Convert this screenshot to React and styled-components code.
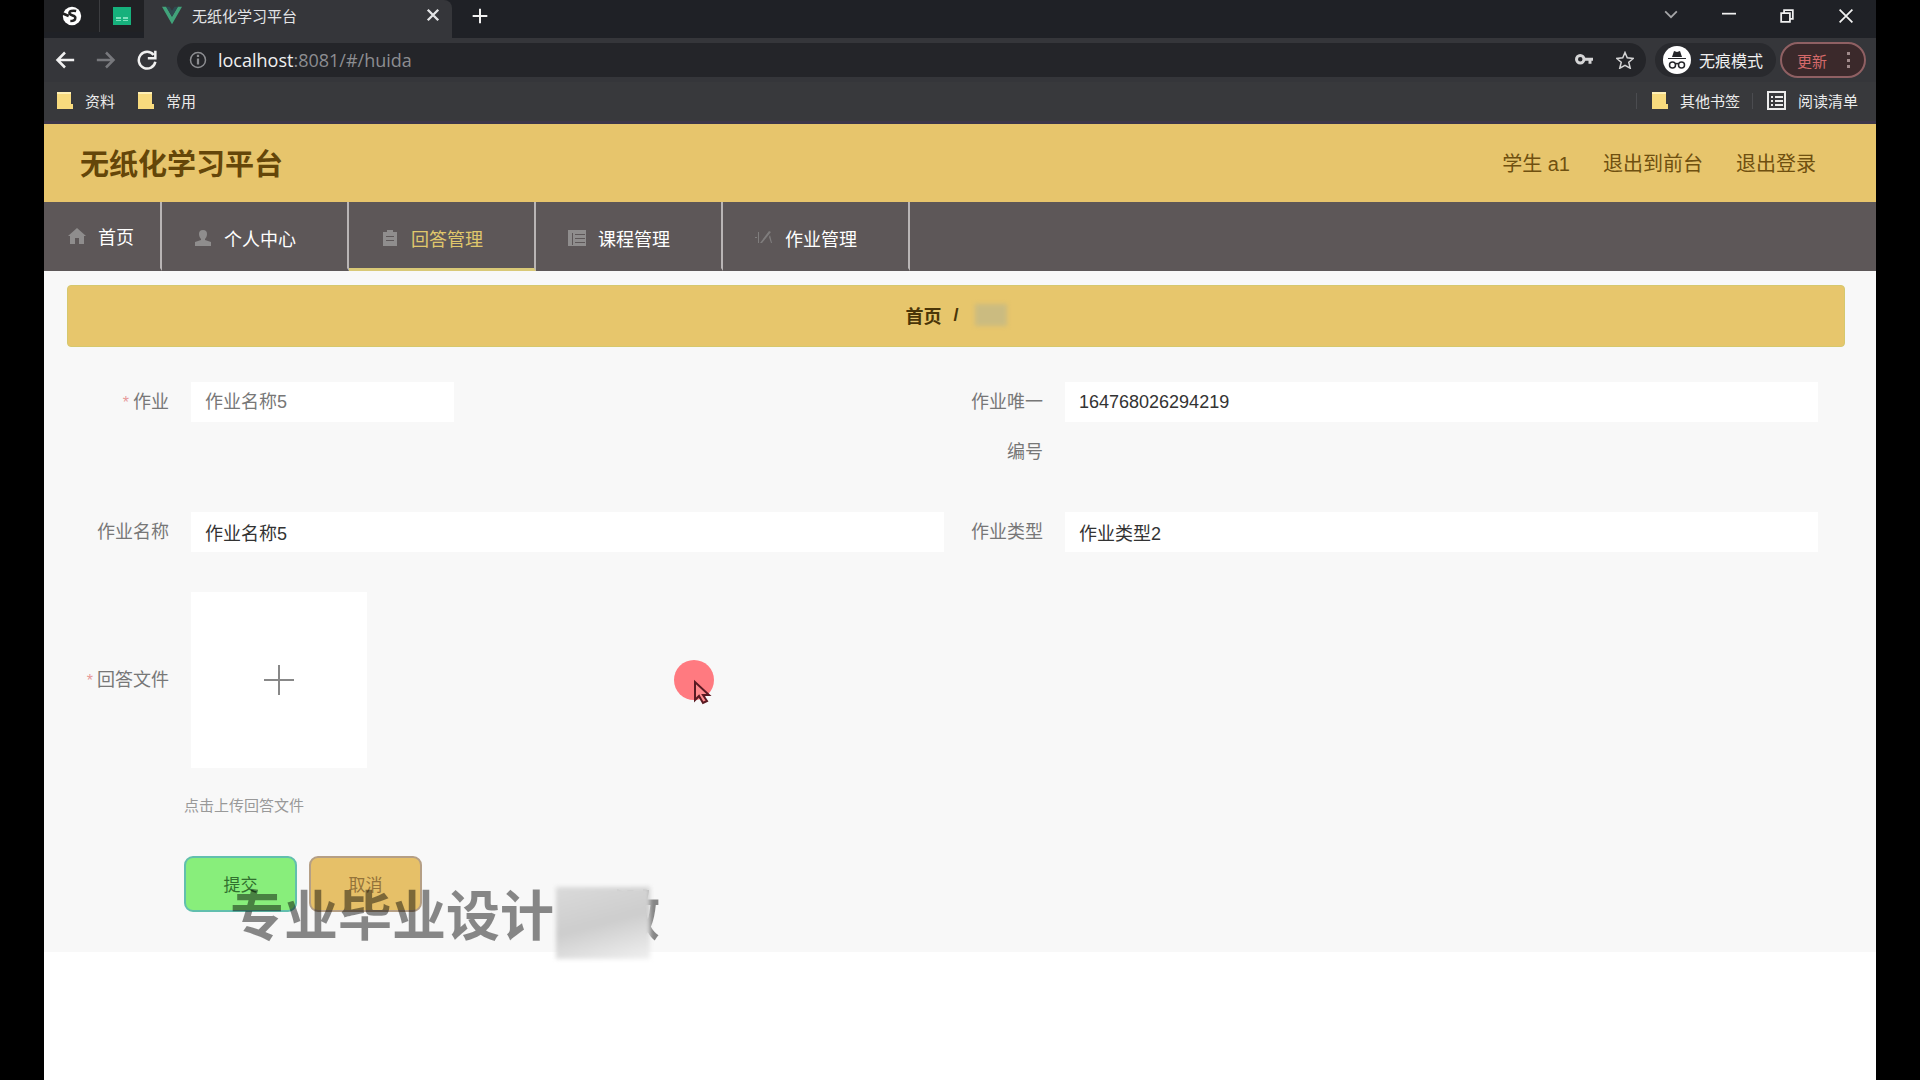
import React, { Component } from "react";
import styled, { createGlobalStyle } from "styled-components";

const GlobalStyle = createGlobalStyle`
  * {
    box-sizing: border-box;
  }

  body {
    margin: 0;
    background: #000;
    font-family: "Liberation Sans", "Noto Sans CJK SC", sans-serif;
  }

  button, input, select {
    font-family: inherit;
  }
`;

const Screen = styled.div`
  position: relative;
  min-height: 100vh;
  margin: 0 44px;
  background: #fff;
`;

/* browser window */

const TabStrip = styled.div`
  display: flex;
  align-items: center;
  height: 38px;
  padding-bottom: 6px;
  background: #1f2126;
`;

const PinnedTab = styled.button`
  display: flex;
  align-items: center;
  justify-content: center;
  width: ${props => (props.$wide ? "56px" : "44px")};
  height: 32px;
  padding: 0;
  border: 0;
  border-right: ${props => (props.$line ? "1px solid #3c3d40" : "0")};
  background: #202124;
`;

const ActiveTab = styled.div`
  display: flex;
  align-items: center;
  align-self: flex-start;
  width: 308px;
  height: 38px;
  padding: 0 12px 8px 18px;
  border-radius: 0 8px 0 0;
  background: #35363a;
  color: #e3e4e6;
  font-size: 15px;
`;

const TabTitle = styled.span`
  flex: 1;
  margin-left: 10px;
`;

const IconButton = styled.button`
  display: flex;
  align-items: center;
  justify-content: center;
  width: ${props => props.$width || 41}px;
  height: 32px;
  padding: 0;
  border: 0;
  background: none;
  color: ${props => props.$color || "#f1f1f1"};
`;

const WindowButtons = styled.div`
  display: flex;
  margin-left: auto;
`;

const Toolbar = styled.div`
  display: flex;
  align-items: center;
  height: 44px;
  background: #35363a;
`;

const AddressBar = styled.div`
  display: flex;
  flex: 1;
  align-items: center;
  height: 34px;
  margin-left: 10px;
  padding-left: 12px;
  border-radius: 17px;
  background: #242529;
  font-family: "Open Sans", sans-serif;
  font-size: 18px;
  color: #8c8d91;
`;

const Address = styled.span`
  flex: 1;
  margin-left: 11px;

  b {
    font-weight: 400;
    color: #f0f0f0;
  }
`;

const Incognito = styled.div`
  display: flex;
  align-items: center;
  gap: 8px;
  height: 34px;
  margin-left: 9px;
  padding: 0 13px 0 8px;
  border-radius: 17px;
  background: #292a2e;
  color: #f0f0f0;
  font-size: 16px;
`;

const UpdateButton = styled.button`
  display: flex;
  align-items: center;
  justify-content: space-between;
  width: 86px;
  height: 36px;
  margin: 0 10px 0 4px;
  padding: 0 7px 0 15px;
  border: 2px solid #8f6063;
  border-radius: 18px;
  background: #3b292b;
  color: #d4696a;
  font-size: 15px;
`;

const Bookmarks = styled.div`
  display: flex;
  align-items: center;
  height: 42px;
  padding: 0 18px 2px 12px;
  border-bottom: 3px solid #3d364a;
  background: #38393c;
`;

const Bookmark = styled.a`
  display: flex;
  align-items: center;
  gap: 12px;
  margin-right: 22px;
  color: #ececec;
  font-size: 15px;
  text-decoration: none;
`;

const BookmarkGroup = styled.div`
  display: flex;
  align-items: center;
  margin-left: auto;

  ${Bookmark} {
    margin-right: 0;
  }
`;

const Divider = styled.span`
  width: 1px;
  height: 16px;
  margin: 0 14px 0 12px;
  background: #4b4c50;
`;

/* page */

const Header = styled.header`
  display: flex;
  align-items: center;
  justify-content: space-between;
  height: 78px;
  padding: 0 60px 2px 36px;
  background: #e7c56c;
  color: #6f5010;
`;

const Title = styled.h1`
  margin: 0;
  font-size: 29px;
  font-weight: 700;
  color: #644609;
`;

const UserLinks = styled.div`
  display: flex;
  gap: 33px;
  font-size: 20px;

  a {
    color: inherit;
    text-decoration: none;
  }
`;

const Nav = styled.nav`
  display: flex;
  height: 69px;
  background: #5d5758;
`;

const NavItem = styled.a`
  display: flex;
  align-items: center;
  gap: 12px;
  width: ${props => (props.$home ? "118px" : "187px")};
  padding: ${props => (props.$home ? "2px 0 0 24px" : "6px 0 0 32px")};
  border-right: 2px solid #b9b5b5;
  border-bottom: 3px solid ${props => (props.$active ? "#d9c977" : "#5d5758")};
  color: ${props => (props.$active ? "#e0c86c" : "#fff")};
  font-size: 18px;
  text-decoration: none;

  svg {
    color: #8f8d8d;
  }
`;

const Main = styled.main`
  padding: 14px 31px 40px 23px;
  background: #f8f8f8;
`;

const Breadcrumb = styled.div`
  display: flex;
  align-items: center;
  justify-content: center;
  gap: 12px;
  height: 62px;
  padding-bottom: 2px;
  border: 1px solid #d6c86d;
  border-radius: 4px;
  background: #e7c66c;
  color: #4a3508;
  font-size: 18px;
  font-weight: 700;
`;

const Smudge = styled.span`
  width: 32px;
  height: 22px;
  margin-left: 4px;
  background: #cbbb80;
  filter: blur(2px);
`;

const Form = styled.form`
  display: grid;
  grid-template-columns: 1fr 1fr;
  row-gap: 30px;
  padding: 30px 13px 0 17px;
`;

const FormItem = styled.div`
  display: flex;
  align-items: ${props => (props.$wide ? "center" : "flex-start")};
  gap: 22px;
  padding-right: 14px;
  grid-column: ${props => (props.$wide ? "1 / -1" : "auto")};
`;

const Label = styled.label`
  flex: none;
  width: 85px;
  color: #777;
  font-size: 18px;
  line-height: 50px;
  text-align: right;

  &::before {
    content: ${props => (props.$required ? '"*"' : "none")};
    margin-right: 4px;
    color: #e79a9a;
    font-size: 16px;
  }
`;

const Input = styled.input`
  flex: 1;
  min-width: 0;
  height: 40px;
  margin: 5px 0;
  padding: 0 14px;
  border: 0;
  background: #fff;
  color: #333;
  font-size: 18px;
`;

const Select = styled.select`
  width: 263px;
  height: 40px;
  margin: 5px 0;
  padding: 0 14px;
  border: 0;
  appearance: none;
  background: #fff;
  color: #777;
  font-size: 18px;
`;

const Upload = styled.label`
  display: flex;
  align-items: center;
  justify-content: center;
  width: 176px;
  height: 176px;
  margin: 5px 0;
  background: #fff;
  color: #888;

  input {
    position: absolute;
    width: 1px;
    height: 1px;
    opacity: 0;
  }
`;

const FormFooter = styled.div`
  grid-column: 1 / -1;
  margin: -9px 0 0 100px;
`;

const Tip = styled.p`
  margin: 0 0 38px;
  color: #999;
  font-size: 15px;
  line-height: 24px;
`;

const Buttons = styled.div`
  display: flex;
  gap: 12px;
`;

const Button = styled.button`
  width: 113px;
  height: 56px;
  padding: 0 0 2px;
  border: 2px solid ${props => (props.$primary ? "#62bfae" : "#b59f85")};
  border-radius: 9px;
  background: ${props => (props.$primary ? "#88ee7b" : "#e6c068")};
  color: ${props => (props.$primary ? "#31702e" : "#94733a")};
  font-size: 17px;
`;

/* overlays */

const Watermark = styled.div`
  position: absolute;
  top: 875px;
  left: 186px;
  display: flex;
  align-items: center;
  color: rgba(0, 0, 0, 0.46);
  font-size: 54px;
  font-weight: 700;
  line-height: 80px;
  white-space: nowrap;
  pointer-events: none;
`;

const Cover = styled.span`
  position: relative;
  z-index: 1;
  width: 94px;
  height: 72px;
  margin: 12px -44px 0 2px;
  background: linear-gradient(165deg, #dadada, #cdcdcd 50%, #f0f0f0);
  filter: blur(2px);
`;

const Pointer = styled.div`
  position: absolute;
  top: 660px;
  left: 630px;
  width: 44px;
  height: 48px;
  pointer-events: none;
`;

const Icon = ({ size = 20, box = 24, children, ...rest }) => (
  <svg
    width={size}
    height={size}
    viewBox={`0 0 ${box} ${box}`}
    fill="none"
    stroke="currentColor"
    strokeWidth="2"
    aria-hidden="true"
    {...rest}
  >
    {children}
  </svg>
);

const Folder = () => (
  <Icon size={17} box={17} stroke="none">
    <path d="M1 0h14v12h2v5H1z" fill="#f8db7e" />
    <path d="M1 0h14v2H1z" fill="#fff0b5" />
  </Icon>
);

const navItems = [
  {
    name: "首页",
    home: true,
    icon: <path d="M9 1 0 9h2v8h5v-6h4v6h5V9h2z" />
  },
  {
    name: "个人中心",
    icon: <path d="M9 1a4 4 0 0 1 4 4c0 2-1 4-2 5v1l6 2v4H1v-4l6-2v-1C6 9 5 7 5 5a4 4 0 0 1 4-4z" />
  },
  {
    name: "回答管理",
    active: true,
    icon: <path d="M2 3h4V1h6v2h4v14H2zM5 7v1h8V7zM5 11v1h8v-1z" fillRule="evenodd" />
  },
  {
    name: "课程管理",
    icon: <path d="M0 1h18v16H0zM7 5v1h10V5zM7 9v1h10V9zM7 13v1h10v-1zM4 4v12h1V4z" fillRule="evenodd" />
  },
  {
    name: "作业管理",
    icon: <path d="M3 3h1v11H3zM5 14 14 2l2 1-9 11zM15 6l2 8h-1l-2-6zM0 8h2v1H0z" opacity=".7" />
  }
];

class App extends Component {
  state = {
    homework: "作业名称5",
    number: "164768026294219",
    name: "作业名称5",
    type: "作业类型2"
  };

  handleChange = e => {
    this.setState({ [e.target.name]: e.target.value });
  };

  renderBrowser() {
    return (
      <div>
        <TabStrip>
          <PinnedTab $wide $line aria-label="Tab 1">
            <Icon size={20}>
              <circle cx="12" cy="12" r="11" fill="#fff" stroke="none" />
              <path d="M17 6c-4-1-9 0-8 3s7 2 7 5-3 4-6 4M1 9l7 3" stroke="#222" strokeWidth="3" />
            </Icon>
          </PinnedTab>
          <PinnedTab aria-label="Tab 2">
            <Icon size={18} box={18} stroke="none">
              <path d="M0 0h18v18H0z" fill="#16b17c" />
              <path d="M3 10h5v2H3zM10 10h5v2h-5zM3 13h5v1H3zM10 13h5v1h-5z" fill="#7fe0bd" />
            </Icon>
          </PinnedTab>
          <ActiveTab>
            <Icon size={20} stroke="none">
              <path d="M0 2h5l7 12 7-12h5L12 23z" fill="#41a37a" />
              <path d="M5 2h4l3 5 3-5h4l-7 12z" fill="#2f4a50" />
            </Icon>
            <TabTitle>无纸化学习平台</TabTitle>
            <Icon size={14} strokeWidth="4"><path d="m3 3 18 18M21 3 3 21" /></Icon>
          </ActiveTab>
          <IconButton $width={56} aria-label="New tab">
            <Icon size={16} strokeWidth="3"><path d="M12 1v22M1 12h22" /></Icon>
          </IconButton>
          <WindowButtons>
            <IconButton $width={58} $color="#a5a6a8" aria-label="Search tabs">
              <Icon size={14} strokeWidth="3"><path d="m2 4 10 10L22 4" /></Icon>
            </IconButton>
            <IconButton $width={58} aria-label="Minimize">
              <Icon size={14} strokeWidth="3"><path d="M0 8h24" /></Icon>
            </IconButton>
            <IconButton $width={58} aria-label="Restore">
              <Icon size={14} strokeWidth="3"><path d="M2 7h15v15H2zM7 7V2h15v15h-5" /></Icon>
            </IconButton>
            <IconButton $width={60} aria-label="Close">
              <Icon size={14} strokeWidth="3"><path d="m1 1 22 22M23 1 1 23" /></Icon>
            </IconButton>
          </WindowButtons>
        </TabStrip>
        <Toolbar>
          <IconButton aria-label="Back">
            <Icon strokeWidth="3"><path d="M23 12H4M12 3l-9 9 9 9" /></Icon>
          </IconButton>
          <IconButton $color="#77787c" aria-label="Forward">
            <Icon strokeWidth="3"><path d="M1 12h19M12 3l9 9-9 9" /></Icon>
          </IconButton>
          <IconButton aria-label="Reload">
            <Icon strokeWidth="3"><path d="M20 6a10 10 0 1 0 2 8M22 1v9h-9" /></Icon>
          </IconButton>
          <AddressBar>
            <Icon size={18}>
              <circle cx="12" cy="12" r="10" />
              <path d="M12 10v8M12 5v3" strokeWidth="3" />
            </Icon>
            <Address><b>localhost</b>:8081/#/huida</Address>
            <IconButton $color="#d5d5d6" aria-label="Password">
              <Icon size={18} strokeWidth="4">
                <circle cx="7" cy="11" r="5" />
                <path d="M12 11h12M20 11v6" />
              </Icon>
            </IconButton>
            <IconButton $color="#d5d5d6" aria-label="Bookmark">
              <Icon size={18}>
                <path d="m12 2 3 7 8 1-6 5 2 8-7-4-7 4 2-8-6-5 8-1z" />
              </Icon>
            </IconButton>
          </AddressBar>
          <Incognito>
            <Icon size={28} box={28} stroke="none">
              <circle cx="14" cy="14" r="14" fill="#fff" />
              <path d="M9 11l2-6 3 1 3-1 2 6zM5 12h18v1H5z" fill="#25262a" />
              <g fill="none" stroke="#25262a" strokeWidth="1.5">
                <circle cx="9.5" cy="19" r="3" />
                <circle cx="18.5" cy="19" r="3" />
                <path d="M12 18q2-1 4 0" />
              </g>
            </Icon>
            <span>无痕模式</span>
          </Incognito>
          <UpdateButton>
            <span>更新</span>
            <Icon size={18} box={18} stroke="none">
              <path d="M8 1h3v3H8zM8 8h3v3H8zM8 14h3v3H8z" fill="#a08a8b" />
            </Icon>
          </UpdateButton>
        </Toolbar>
        <Bookmarks>
          <Bookmark href="#"><Folder />资料</Bookmark>
          <Bookmark href="#"><Folder />常用</Bookmark>
          <BookmarkGroup>
            <Divider />
            <Bookmark href="#"><Folder />其他书签</Bookmark>
            <Divider />
            <Bookmark href="#">
              <Icon size={19} box={19} strokeWidth="2">
                <path d="M1 1h17v17H1zM4 6h2M8 6h8M4 10h2M8 10h8M4 14h2M8 14h8" />
              </Icon>
              阅读清单
            </Bookmark>
          </BookmarkGroup>
        </Bookmarks>
      </div>
    );
  }

  renderForm() {
    const { homework, number, name, type } = this.state;

    return (
      <Form onSubmit={e => e.preventDefault()}>
        <FormItem>
          <Label $required htmlFor="homework">作业</Label>
          <Select id="homework" name="homework" value={homework} onChange={this.handleChange}>
            <option>作业名称5</option>
          </Select>
        </FormItem>
        <FormItem>
          <Label htmlFor="number">作业唯一编号</Label>
          <Input id="number" name="number" value={number} onChange={this.handleChange} />
        </FormItem>
        <FormItem>
          <Label htmlFor="name">作业名称</Label>
          <Input id="name" name="name" value={name} onChange={this.handleChange} />
        </FormItem>
        <FormItem>
          <Label htmlFor="type">作业类型</Label>
          <Input id="type" name="type" value={type} onChange={this.handleChange} />
        </FormItem>
        <FormItem $wide>
          <Label $required htmlFor="file">回答文件</Label>
          <Upload>
            <input id="file" type="file" />
            <Icon size={30} box={30}><path d="M15 0v30M0 15h30" /></Icon>
          </Upload>
        </FormItem>
        <FormFooter>
          <Tip>点击上传回答文件</Tip>
          <Buttons>
            <Button $primary type="submit">提交</Button>
            <Button type="button">取消</Button>
          </Buttons>
        </FormFooter>
      </Form>
    );
  }

  render() {
    return (
      <Screen>
        <GlobalStyle />
        {this.renderBrowser()}
        <Header>
          <Title>无纸化学习平台</Title>
          <UserLinks>
            <span>学生 a1</span>
            <a href="#">退出到前台</a>
            <a href="#">退出登录</a>
          </UserLinks>
        </Header>
        <Nav>
          {navItems.map(item => (
            <NavItem key={item.name} href="#" $home={item.home} $active={item.active}>
              <Icon size={18} box={18} fill="currentColor" stroke="none">
                {item.icon}
              </Icon>
              {item.name}
            </NavItem>
          ))}
        </Nav>
        <Main>
          <Breadcrumb>
            <span>首页</span>
            <span>/</span>
            <Smudge />
          </Breadcrumb>
          {this.renderForm()}
        </Main>
        <Watermark>
          <span>专业毕业设计</span>
          <Cover />
          <span>做</span>
        </Watermark>
        <Pointer>
          <svg width="44" height="48" viewBox="0 0 44 48">
            <circle cx="20" cy="20" r="20" fill="#ff7a80" />
            <path
              d="M21 22v18l4-4 4 7 4-2-4-6h6z"
              fill="#ff8a8d"
              stroke="#5a1a22"
              strokeWidth="2"
            />
          </svg>
        </Pointer>
      </Screen>
    );
  }
}

export default App;
